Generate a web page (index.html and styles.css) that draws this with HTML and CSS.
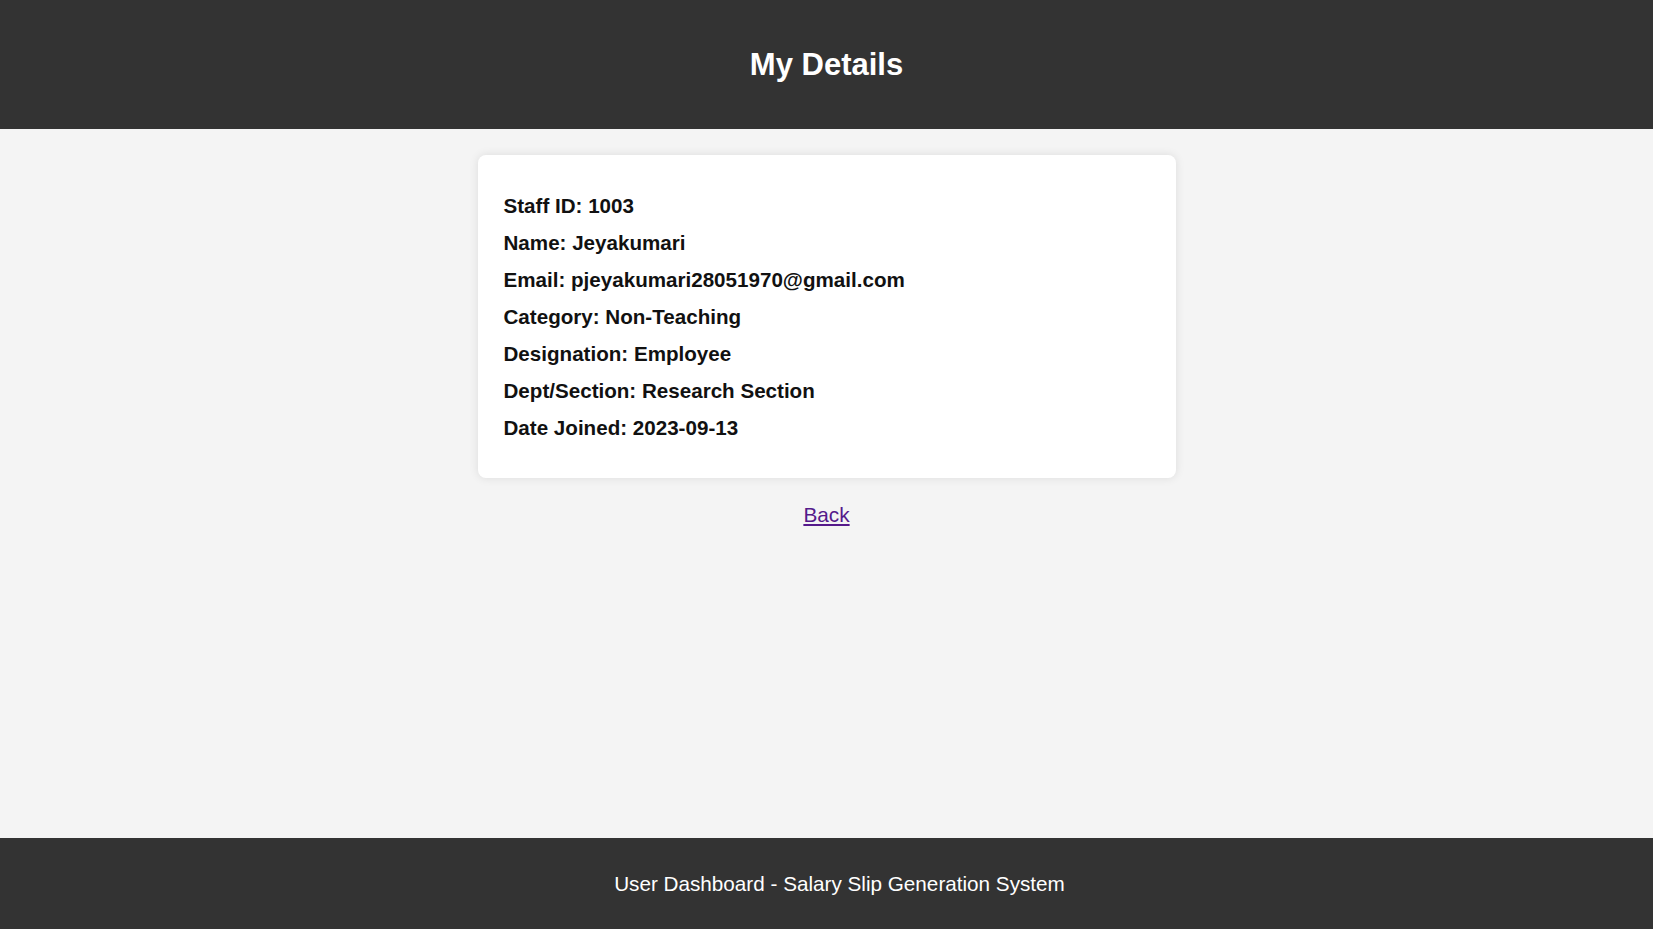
FILE: index.html
```html
<!DOCTYPE html>
<html lang="en">
<head>
<meta charset="utf-8">
<title>My Details</title>
<link rel="stylesheet" href="styles.css">
</head>
<body>
<header class="site-header">
  <h1 class="site-title">My Details</h1>
</header>
<main class="content">
  <section class="details-card">
    <p class="detail">Staff ID: 1003</p>
    <p class="detail">Name: Jeyakumari</p>
    <p class="detail">Email: pjeyakumari28051970@gmail.com</p>
    <p class="detail">Category: Non-Teaching</p>
    <p class="detail">Designation: Employee</p>
    <p class="detail">Dept/Section: Research Section</p>
    <p class="detail">Date Joined: 2023-09-13</p>
  </section>
  <a class="back-link" href="#">Back</a>
</main>
<footer class="site-footer">
  <p class="footer-text">User Dashboard - Salary Slip Generation System</p>
</footer>
</body>
</html>
```

FILE: styles.css
```css
* { box-sizing: border-box; }
html, body { height: 100%; }
body {
  margin: 0;
  font-family: "Liberation Sans", Arial, sans-serif;
  background: #f4f4f4;
  color: #111;
  display: flex;
  flex-direction: column;
}
.site-header {
  background: #333;
  color: #fff;
  height: 129px;
  display: flex;
  align-items: center;
  justify-content: center;
}
.site-title {
  margin: 0;
  font-size: 31px;
  font-weight: bold;
}
.content {
  flex: 1;
  display: flex;
  flex-direction: column;
  align-items: center;
  padding-top: 26px;
}
.details-card {
  width: 698px;
  background: #fff;
  border-radius: 8px;
  box-shadow: 0 0 10px rgba(0,0,0,0.1);
  padding: 32px 25px 32px 26px;
}
.detail {
  margin: 0;
  font-size: 20.6px;
  font-weight: bold;
  line-height: 37px;
}
.back-link {
  margin-top: 25px;
  font-size: 20.8px;
  color: #551a8b;
}
.site-footer {
  background: #333;
  color: #fff;
  height: 91px;
  display: flex;
  align-items: center;
  justify-content: center;
  padding-left: 26px;
}
.footer-text {
  margin: 0;
  font-size: 20.7px;
}
```
